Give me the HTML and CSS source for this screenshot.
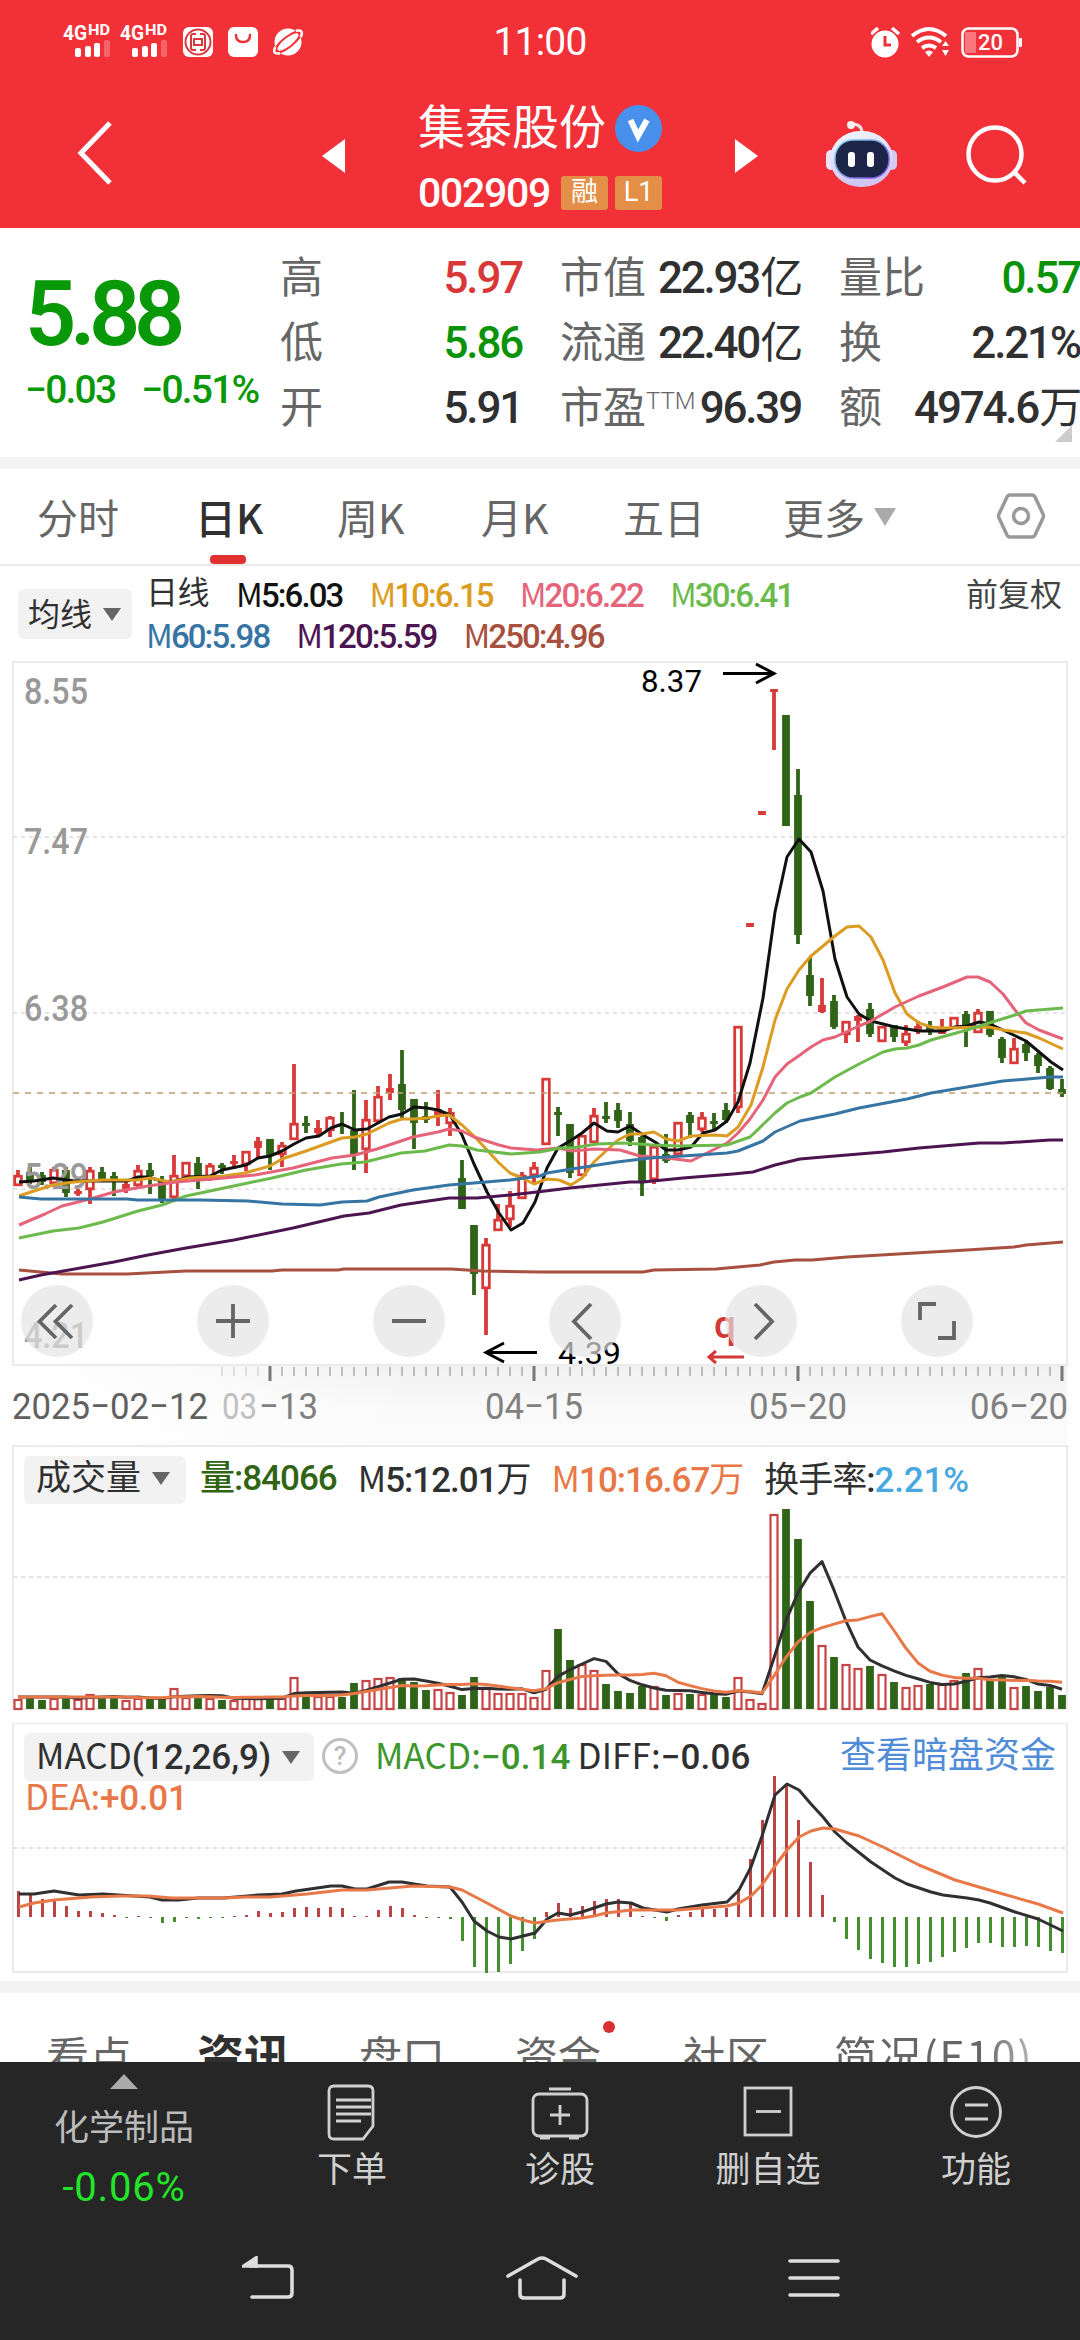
FILE: index.html
```html
<!DOCTYPE html>
<html lang="zh-CN">
<head>
    <meta charset="UTF-8">
    <meta name="viewport" content="width=device-width, initial-scale=1.0">
    <title>集泰股份 002909</title>
    <link rel="stylesheet" href="styles.css">
</head>
<body>

<header class="header">
    <div class="status">
        <svg class="status-left" width="260" height="36" viewBox="0 0 260 36" fill="#fff">
            <g id="signal">
                <text x="0" y="18" font-size="21" font-weight="700" textLength="24" lengthAdjust="spacingAndGlyphs">4G</text>
                <text x="25" y="13" font-size="14" font-weight="700" textLength="22" lengthAdjust="spacingAndGlyphs">HD</text>
                <rect x="12" y="26" width="6" height="9" rx="2"/>
                <rect x="22" y="24" width="6" height="11" rx="2"/>
                <rect x="31" y="21" width="6" height="14" rx="2"/>
                <rect x="41" y="18" width="6" height="17" rx="2" opacity=".25"/>
            </g>
            <use href="#signal" x="57"/>
            <rect x="120" y="5" width="30" height="30" rx="6"/>
            <g fill="none" stroke="#d9363c" stroke-width="2">
                <circle cx="135" cy="20" r="12.5"/>
                <rect x="131" y="17" width="8" height="6"/>
                <path d="M133 12h-3q-2 0-2 2v12q0 2 2 2h3M137 12h3q2 0 2 2v12q0 2-2 2h-3"/>
            </g>
            <rect x="165" y="5" width="30" height="30" rx="6"/>
            <path d="M173 13q0 7 7 7t7-7" fill="none" stroke="#f03038" stroke-width="2.5" stroke-linecap="round"/>
            <circle cx="225" cy="20" r="13.5"/>
            <g transform="rotate(-38 225 20)">
                <ellipse cx="225" cy="20" rx="17.500" ry="6" fill="#f23037"/>
                <path d="M212 16q-8 4 0 8M238 16q8 4 0 8" fill="none" stroke="#fff" stroke-width="2.500"/>
                <ellipse cx="225" cy="20" rx="13" ry="4" fill="#fff"/>
            </g>
        </svg>
        <span class="time">11:00</span>
        <svg class="status-right" width="152" height="34" viewBox="0 0 152 34" fill="#fff">
            <circle cx="14" cy="18" r="13.5"/>
            <path d="M0 8l7-6M21 2l7 6" stroke="#fff" stroke-width="3.5"/>
            <path d="M14 10v9h6" fill="none" stroke="#e8323a" stroke-width="3"/>
            <g fill="none" stroke="#fff" stroke-width="4">
                <path d="M41 10q17-14 34 0M46 16q12-9 24 0M51 22q7-5 14 0"/>
            </g>
            <path d="M54 26q4-3 8 0l-4 5zM71 20l3.500-5 3.500 5zM71 24l3.500 6 3.500-6z"/>
            <rect x="91.500" y="2.500" width="55" height="28" rx="6" fill="none" stroke="#fff" stroke-width="2.500"/>
            <rect x="94" y="6" width="11" height="21" fill="#f8787d"/>
            <rect x="148" y="12" width="3" height="9" rx="1"/>
            <text x="107" y="24" font-size="22" font-weight="500" textLength="25">20</text>
        </svg>
    </div>
    <div class="titlebar">
        <svg class="back" width="36" height="64" viewBox="0 0 36 64" fill="none" stroke="#fff" stroke-width="5"><path d="M33 2L4 32l29 30"/></svg>
        <svg width="23" height="34" viewBox="0 0 23 34" fill="#fff"><path d="M23 0v34L0 17z"/></svg>
        <div class="title">
            <div class="name"><span>集泰股份</span>
                <svg width="47" height="47" viewBox="0 0 47 47"><circle cx="23.500" cy="23.500" r="23.500" fill="#4890ec"/><path d="M15.500 15l7.500 16 9-16" fill="none" stroke="#fff" stroke-width="6"/></svg>
            </div>
            <div class="code"><b>002909</b><i>融</i><i>L1</i></div>
        </div>
        <svg width="23" height="34" viewBox="0 0 23 34" fill="#fff"><path d="M0 0v34l23-17z"/></svg>
        <svg class="robot" width="74" height="68" viewBox="0 0 74 68">
            <defs>
                <linearGradient id="shell" x1="0" y1="0" x2=".3" y2="1"><stop offset="0" stop-color="#f4fbff"/><stop offset="1" stop-color="#cfc4f4"/></linearGradient>
                <linearGradient id="rim" x1="0" y1="0" x2="1" y2="1"><stop offset="0" stop-color="#7be0e8"/><stop offset="1" stop-color="#7a3fe0"/></linearGradient>
            </defs>
            <path d="M27 4q10 0 10 9" fill="none" stroke="#f0e0ea" stroke-width="3"/>
            <circle cx="26" cy="5" r="4" fill="#fff0f2"/>
            <rect x="1" y="30" width="10" height="20" rx="5" fill="#e8e4fb"/>
            <rect x="62" y="30" width="10" height="20" rx="5" fill="#d4caf4"/>
            <rect x="5" y="11" width="63" height="56" rx="30" fill="url(#shell)"/>
            <rect x="10" y="20" width="54" height="38" rx="18" fill="#1c2448" stroke="url(#rim)" stroke-width="1.500"/>
            <rect x="23" y="32" width="7" height="15" rx="3" fill="#fff"/>
            <rect x="42" y="32" width="7" height="15" rx="3" fill="#fff"/>
        </svg>
        <svg class="search" width="62" height="62" viewBox="0 0 62 62" fill="none" stroke="#fff" stroke-width="4.500"><circle cx="29" cy="29" r="26.500"/><path d="M48 47l11 11"/></svg>
    </div>
</header>

<section class="quote">
    <div class="price">
        <div class="last">5.88</div>
        <div class="change"><span>−0.03</span><span>−0.51%</span></div>
    </div>
    <dl class="stats">
        <dt>高</dt><dd class="up">5.97</dd>
        <dt>市值</dt><dd>22.93<em>亿</em></dd>
        <dt>量比</dt><dd class="down">0.57</dd>
        <dt>低</dt><dd class="down">5.86</dd>
        <dt>流通</dt><dd>22.40<em>亿</em></dd>
        <dt>换</dt><dd>2.21%</dd>
        <dt>开</dt><dd>5.91</dd>
        <dt>市盈<sup>TTM</sup></dt><dd>96.39</dd>
        <dt>额</dt><dd>4974.6<em>万</em></dd>
    </dl>
    <span class="corner"></span>
</section>

<nav class="tabs">
    <a>分时</a>
    <a class="active">日K</a>
    <a>周K</a>
    <a>月K</a>
    <a>五日</a>
    <a>更多<span class="arrow"></span></a>
    <svg width="50" height="46" viewBox="0 0 50 46" fill="none" stroke="#999" stroke-width="3.500"><path d="M14 2h22q2 0 3 2l8 17q1 2 0 4l-8 17q-1 2-3 2H14q-2 0-3-2L3 25q-1-2 0-4l8-17q1-2 3-2z"/><circle cx="25" cy="23" r="7.500"/></svg>
</nav>

<section class="legend">
    <button class="pick">均线<span class="arrow"></span></button>
    <div class="rows">
        <div><span class="day">日线</span><span class="m5"><s>M</s>5:6.03</span><span class="m10"><s>M</s>10:6.15</span><span class="m20"><s>M</s>20:6.22</span><span class="m30"><s>M</s>30:6.41</span></div>
        <div><span class="m60"><s>M</s>60:5.98</span><span class="m120"><s>M</s>120:5.59</span><span class="m250"><s>M</s>250:4.96</span></div>
    </div>
    <span class="adjust">前复权</span>
</section>

<section class="kline">
    <svg id="kline" width="1080" height="784" viewBox="0 0 1080 784">
        <defs>
            <linearGradient id="fade"><stop offset="0" stop-color="#fff"/><stop offset=".3" stop-color="#fff" stop-opacity=".8"/><stop offset="1" stop-color="#fff" stop-opacity="0"/></linearGradient>
            <linearGradient id="axis" x1="0" y1="0" x2="0" y2="1"><stop offset="0" stop-color="#f1f1f1"/><stop offset=".5" stop-color="#f9f9f9"/><stop offset="1" stop-color="#fbfbfb"/></linearGradient>
        </defs>
    </svg>
    <div class="tools">
        <button><svg viewBox="0 0 72 72"><path d="M35 20L18.500 36.500 35 53M51 20L34.500 36.500 51 53"/></svg></button>
        <button><svg viewBox="0 0 72 72"><path d="M19 36h34M36 19v34"/></svg></button>
        <button><svg viewBox="0 0 72 72"><path d="M19 36h34"/></svg></button>
        <button><svg viewBox="0 0 72 72"><path d="M42 19L25 36.500 42 54"/></svg></button>
        <button><svg viewBox="0 0 72 72"><path d="M30 19l17 17.500L30 54"/></svg></button>
        <button><svg viewBox="0 0 72 72"><path d="M19 35V19h16M53 36v17H37"/></svg></button>
    </div>
</section>

<section class="panel volume">
    <svg id="volume" width="1080" height="277" viewBox="0 0 1080 277"></svg>
    <div class="bar">
        <button class="pick">成交量<span class="arrow"></span></button>
        <span class="vol">量:84066</span>
        <span class="dark"><s>M</s>5:12.01<em>万</em></span>
        <span class="orange"><s>M</s>10:16.67<em>万</em></span>
        <span class="dark"><em>换手率</em>:<span class="blue">2.21%</span></span>
    </div>
</section>

<section class="panel macd">
    <svg id="macd" width="1080" height="258" viewBox="0 0 1080 258"></svg>
    <div class="bar">
        <button class="pick"><s>MACD</s>(12,26,9)<span class="arrow"></span></button>
        <span class="help">?</span>
        <span class="green"><s>MACD:</s>−0.14</span>
        <span class="dark"><s>DIFF:</s>−0.06</span>
        <a class="link">查看暗盘资金</a>
    </div>
    <div class="dea"><s>DEA:</s>+0.01</div>
</section>

<nav class="news">
    <a>看点</a>
    <a class="active">资讯</a>
    <a>盘口</a>
    <a class="dot">资金</a>
    <a>社区</a>
    <a class="last-tab">简况(E10)</a>
</nav>

<footer class="footer">
    <div class="actions">
        <div class="industry">
            <span class="tri"></span>
            <span>化学制品</span>
            <b>-0.06%</b>
        </div>
        <div class="action">
            <svg width="58" height="58" viewBox="0 0 58 58"><path d="M11 3h34q5 0 5 5v35L40 56H11q-5 0-5-5V8q0-5 5-5z"/><path d="M13 17h35M13 24h35M13 31h35M13 38h25"/></svg>
            <span>下单</span>
        </div>
        <div class="action">
            <svg width="58" height="58" viewBox="0 0 58 58"><rect x="2" y="11" width="54" height="42" rx="6"/><path d="M18 6h22M29 22v20M19 32h20M9 55h10M38 55h10"/></svg>
            <span>诊股</span>
        </div>
        <div class="action">
            <svg width="58" height="58" viewBox="0 0 58 58"><rect x="6" y="5" width="46" height="47"/><path d="M17 28.500h25"/></svg>
            <span>删自选</span>
        </div>
        <div class="action">
            <svg width="58" height="58" viewBox="0 0 58 58"><circle cx="29" cy="29" r="24.500"/><path d="M18 22h23M18 36h23"/></svg>
            <span>功能</span>
        </div>
    </div>
    <div class="nav">
        <svg width="54" height="44" viewBox="0 0 54 44"><path d="M8 10h38q4 0 4 4v23q0 4-4 4H10" /><path d="M2 10l12-8v8z" fill="#ddd"/></svg>
        <svg width="74" height="46" viewBox="0 0 74 46"><path d="M3 21L33 4q4-2 8 0l30 17M15 25v14q0 4 4 4h36q4 0 4-4V25"/></svg>
        <svg width="52" height="44" viewBox="0 0 52 44"><path d="M2 5h48M2 22h48M2 39h48"/></svg>
    </div>
</footer>

<script src="chart.js"></script>
</body>
</html>
```
FILE: styles.css
```css
* {
    box-sizing: border-box;
}
body {
    margin: 0;
    width: 1080px;
    height: 2340px;
    overflow: hidden;
    background: #fff;
    color: #303030;
    font-family: Roboto, "Noto Sans CJK SC", sans-serif;
}
svg {
    display: block;
}
svg text {
    font-family: Roboto, sans-serif;
}
b, i, em, s {
    font-style: normal;
    text-decoration: none;
}
button {
    border: none;
    padding: 0;
    color: inherit;
    font-family: inherit;
}
s, em {
    font-family: "Noto Sans CJK SC", sans-serif;
    font-weight: 400;
}
.header {
    height: 228px;
    background: #f23037;
    color: #fff;
}
.status {
    display: grid;
    grid-template-columns: 430px 220px 430px;
    height: 84px;
    align-items: start;
}
.status-left {
    margin: 22px 0 0 63px;
}
.time {
    margin-top: 19px;
    text-align: center;
    font-size: 39px;
    line-height: 46px;
    letter-spacing: -.8px;
}
.status-right {
    margin: 26px 0 0 221px;
}
.titlebar {
    display: grid;
    grid-template-columns: 322px 23px 390px 23px 67px 121px 1fr;
    height: 144px;
}
.titlebar > svg {
    margin-top: 55px;
}
.titlebar .back {
    margin: 37px 0 0 77px;
}
.titlebar .robot {
    grid-column: 6;
    margin: 36px 0 0;
}
.titlebar .search {
    margin: 41px 0 0 20px;
}
.title {
    padding-left: 73px;
}
.name {
    display: flex;
    align-items: center;
    gap: 9px;
    margin-top: 16px;
    height: 56px;
    font-size: 47px;
    line-height: 56px;
    white-space: nowrap;
}
.name span {
    margin-top: 0;
}
.name svg {
    flex: none;
}
.code {
    display: flex;
    align-items: center;
    margin-top: 16px;
    gap: 7px;
    height: 42px;
}
.code b {
    margin-right: 4px;
    width: 132px;
    font-size: 41px;
    font-weight: 500;
    letter-spacing: -1.3px;
}
.code i {
    width: 47px;
    height: 34px;
    line-height: 33px;
    text-align: center;
    font-size: 27px;
    border-radius: 3px;
    background: #e38f48;
}
.quote {
    position: relative;
    display: flex;
    height: 241px;
    border-bottom: 12px solid #f4f4f4;
}
.price {
    width: 280px;
    padding-left: 25px;
    color: #089808;
    font-weight: 500;
}
.last {
    margin-top: 32px;
    font-size: 90px;
    line-height: 110px;
    font-weight: 600;
    letter-spacing: -6.5px;
}
.change {
    display: flex;
    gap: 26px;
    margin-top: -3px;
    font-size: 39px;
    line-height: 46px;
    letter-spacing: -1.8px;
}
.stats {
    display: grid;
    grid-template-columns: 80px 200px 138px 141px 100px 141px;
    grid-auto-rows: 65px;
    margin: 18px 0 0;
    width: 800px;
    align-items: center;
    white-space: nowrap;
    line-height: 65px;
}
.stats dt {
    font-size: 43px;
    color: #666;
}
.stats dt sup {
    font-size: 24px;
    font-weight: 300;
    line-height: 0;
    vertical-align: 14px;
}
.stats dd {
    margin: 0;
    font-size: 44px;
    font-weight: 500;
    text-align: right;
    letter-spacing: -2.2px;
    justify-self: end;
}
.stats dd:nth-of-type(3n+1), .stats dd:nth-of-type(3n+2) {
    margin-right: 38px;
}
.stats dd em {
    font-size: 43px;
    margin-left: 1px;
    line-height: 0;
}
.stats .up {
    color: #d83838;
}
.stats .down {
    color: #0a930a;
}
.corner {
    position: absolute;
    right: 8px;
    bottom: 15px;
    border-left: 17px solid transparent;
    border-bottom: 17px solid #ccc;
}
.tabs {
    display: grid;
    grid-template-columns: 158px 142px 144px 142px 160px 213px 50px;
    align-items: center;
    height: 97px;
    padding-left: 37px;
    border-bottom: 2px solid #e8e8e8;
    color: #666;
    font-size: 41px;
    font-family: "Noto Sans CJK SC", sans-serif;
}
.tabs a {
    position: relative;
    top: -1px;
    line-height: 60px;
}
.tabs .active {
    color: #303030;
    font-weight: 500;
}
.tabs .active::after {
    content: "";
    position: absolute;
    left: 15px;
    bottom: -18px;
    width: 36px;
    height: 9px;
    border-radius: 4px;
    background: #e03030;
}
.tabs svg {
    margin-top: -1px;
}
.arrow {
    display: inline-block;
    margin-left: 11px;
    border: 9px solid transparent;
    border-top: 13px solid #666;
    border-bottom: 0;
    vertical-align: 5px;
}
.tabs .arrow {
    margin-left: 9px;
    border-width: 18px 11px 0;
    border-top-color: #aaa;
    vertical-align: 8px;
}
.legend {
    display: flex;
    height: 95px;
    padding-left: 18px;
    font-size: 33px;
    font-weight: 500;
    letter-spacing: -1.9px;
}
.pick {
    height: 48px;
    border-radius: 6px;
    background: #f2f2f2;
    text-align: left;
}
.legend .pick {
    width: 114px;
    height: 50px;
    margin-top: 23px;
    padding: 0 0 4px 10px;
    font-size: 32px;
}
.rows {
    width: 750px;
    padding: 7px 0 0 14px;
}
.rows div {
    display: flex;
    gap: 27px;
    height: 41px;
    line-height: 41px;
}
.day, .adjust {
    font-weight: 400;
    font-size: 32px;
    letter-spacing: -.5px;
}
.adjust {
    margin: 8px 18px 0 auto;
    line-height: 42px;
    color: #444;
    letter-spacing: 0;
}
.m5 { color: #111; }
.m10 { color: #dc9c22; }
.m20 { color: #e5647a; }
.m30 { color: #6cba4c; }
.m60 { color: #3674a4; }
.m120 { color: #4c1450; }
.m250 { color: #a85040; }
.kline, .panel {
    position: relative;
}
.tools {
    position: absolute;
    left: 21px;
    top: 624px;
    display: flex;
    gap: 104px;
}
.tools button {
    width: 72px;
    height: 72px;
    border-radius: 50%;
    background: rgba(227, 227, 227, .68);
}
.tools path {
    fill: none;
    stroke: #666;
    stroke-width: 3.8;
}
.volume {
    height: 278px;
}
.panel .bar {
    position: absolute;
    left: 24px;
    right: 24px;
    top: 11px;
    display: flex;
    align-items: center;
    height: 48px;
    font-size: 35px;
    line-height: 40px;
    font-weight: 500;
    letter-spacing: -1px;
    white-space: nowrap;
}
.panel .bar > span, .bar .link {
    margin-top: -2px;
}
.panel .pick {
    padding: 0 0 3px 12px;
    font-size: 35px;
    line-height: 40px;
    font-weight: 500;
    letter-spacing: 0;
}
.panel.volume .pick {
    width: 162px;
    margin-right: 14px;
    font-weight: 400;
}
.volume .bar > span {
    margin-right: 21px;
}
.panel.macd .pick {
    width: 290px;
    letter-spacing: 0;
}
.panel.macd .bar {
    top: 10px;
    letter-spacing: .1px;
}
.vol { color: #306414; }
.dark { color: #303030; }
.orange, .dea { color: #e87848; }
.blue {
    color: #48a8e0;
    letter-spacing: -.2px;
}
.green { color: #3c962c; }
.bar .help {
    width: 36px;
    height: 36px;
    margin: 0 17px 0 8px;
    border: 3px solid #c0c0c0;
    border-radius: 50%;
    color: #bbb;
    font-size: 26px;
    line-height: 31px;
    text-align: center;
}
.macd .green {
    margin-right: 7px;
}
.link {
    margin-left: auto;
    color: #508cd8;
    font-size: 36px;
    font-weight: 400;
    letter-spacing: 0;
}
.dea {
    position: absolute;
    left: 25px;
    top: 50px;
    font-size: 35px;
    line-height: 44px;
    font-weight: 500;
    letter-spacing: -.2px;
}
.news {
    display: grid;
    grid-template-columns: 151px 162px 156px 168px 151px 1fr;
    height: 81px;
    padding: 32px 0 0 46px;
    border-top: 12px solid #f4f4f4;
    overflow: hidden;
    color: #666;
    font-size: 43px;
    line-height: 58px;
    font-family: "Noto Sans CJK SC", sans-serif;
}
.news a {
    position: relative;
}
.news .active {
    color: #303030;
    font-size: 47px;
    font-weight: 700;
}
.dot::after {
    content: "";
    position: absolute;
    left: 88px;
    top: -4px;
    width: 12px;
    height: 12px;
    border-radius: 50%;
    background: #d83030;
}
.last-tab {
    letter-spacing: 1.6px;
    background: linear-gradient(90deg, #666 60%, #bbb 82%);
    background-clip: text;
    -webkit-background-clip: text;
    color: transparent;
}
.footer {
    height: 279px;
    background: #262626;
    color: #d0d0d0;
}
.actions {
    display: grid;
    grid-template-columns: 248px 208px 208px 208px 208px;
    height: 171px;
}
.industry, .action {
    display: flex;
    flex-direction: column;
    align-items: center;
    font-size: 35px;
}
.industry {
    color: #bbb;
}
.tri {
    margin: 12px 0 10px;
    border: 14px solid transparent;
    border-bottom: 15px solid #aaa;
    border-top: 0;
}
.industry b {
    margin-top: 15px;
    color: #22e428;
    font-weight: 400;
    font-size: 40px;
    line-height: 46px;
    letter-spacing: .8px;
}
.action svg {
    margin: 21px 0 0;
    fill: none;
    stroke: #d0d0d0;
    stroke-width: 2.8;
}
.nav {
    display: flex;
    align-items: center;
    height: 90px;
    padding-left: 242px;
    gap: 209px;
}
.nav svg {
    fill: none;
    stroke: #ddd;
    stroke-width: 3.6;
    stroke-linecap: round;
}
```
FILE: chart.js
```js
const STEP = 12;
const X0 = 18;
const RED = "#d83a3a";
const GREEN = "#306418";

// [up, high, top of body, bottom of body, low]
const candles = [
    [1,509,514,525,525],[0,506,511,521,523],[0,511,514,521,524],[1,506,508,523,525],[0,506,509,532,536],[1,528,530,533,535],
    [1,506,509,529,543],[0,506,511,519,520],[0,511,515,521,535],[1,518,523,530,532],[1,504,509,525,526],[0,502,509,515,533],
    [0,515,519,539,542],[1,494,514,537,538],[1,501,501,516,516],[0,496,502,516,528],[1,502,504,518,520],[0,502,504,507,513],
    [1,494,500,503,508],[1,490,490,504,510],[1,476,480,487,497],[0,478,478,494,509],[1,481,484,494,506],[1,403,462,479,479],
    [0,455,462,465,472],[1,459,467,472,474],[1,455,456,470,476],[0,451,463,466,473],[0,429,469,493,509],[1,439,458,489,512],
    [1,425,435,461,463],[1,413,427,432,439],[0,389,423,449,457],[0,438,438,462,488],[0,441,455,459,462],[1,429,448,454,465],
    [1,447,451,463,475],[0,499,517,548,548],[0,564,564,613,634],[1,577,583,628,674],[1,543,558,570,570],[1,530,544,559,566],
    [1,511,514,538,538],[1,501,506,515,522],[1,417,417,484,484],[0,446,451,453,475],[0,463,463,512,517],[1,474,474,515,515],
    [1,447,454,482,482],[0,441,455,457,462],[0,442,449,460,467],[0,451,463,480,485],[0,475,476,521,535],[1,485,485,519,523],
    [0,473,493,500,502],[1,461,461,494,496],[0,451,454,462,477],[1,451,456,469,471],[0,452,460,463,469],[0,442,449,459,462],
    [1,365,365,447,452],[1,262,262,266,266],[1,150,150,154,154],[1,28,28,31,89],[0,54,54,165,165],[0,108,134,274,283],
    [0,296,314,335,345],[1,317,344,351,352],[0,334,340,366,368],[1,360,360,374,382],[1,354,355,360,381],[0,342,348,373,376],
    [1,365,365,381,381],[0,364,364,376,381],[1,364,372,382,385],[1,360,365,371,373],[0,360,365,371,374],[1,358,366,373,373],
    [1,356,356,368,368],[0,350,353,366,386],[1,348,351,372,372],[0,350,350,374,376],[0,376,378,397,402],[1,377,387,403,403],
    [0,381,383,392,400],[0,392,394,405,412],[0,405,407,428,429],[0,418,428,433,436]
];

const averages = [
    ["#a85040", "19,609 62,613 127,613 186,610 272,610 282,609 338,609 344,608 451,608 482,610 540,611 643,611 654,609 716,608 760,604 774,601 795,599 812,599 847,596 915,592 967,589 1014,586 1026,584 1063,581"],
    ["#111", "19,521 34,520 53,517 74,520 103,520 127,520 138,516 148,516 165,521 176,520 188,516 210,515 222,509 246,504 258,497 270,495 282,490 294,483 306,477 319,475 331,467 342,463 355,469 367,468 389,456 402,453 414,446 427,447 438,449 450,454 462,474 474,503 487,531 499,552 511,569 523,562 535,541 547,507 558,487 570,480 582,472 594,462 607,470 618,471 630,465 643,474 655,481 666,489 678,489 691,486 703,472 715,469 727,460 738,441 750,402 763,337 775,251 787,196 799,178 811,191 823,230 835,298 847,336 859,353 871,360 895,366 919,370 943,370 955,366 967,365 979,361 990,363 1003,369 1026,380 1051,401 1063,409"],
    ["#dc9c22", "19,535 34,530 53,524 74,521 103,519 138,519 150,517 170,521 189,517 224,515 245,512 270,505 282,498 306,490 331,481 342,477 355,476 367,473 389,462 402,458 414,458 427,457 438,455 449,454 462,464 474,475 487,489 499,502 510,512 522,517 534,523 547,518 559,519 571,524 582,517 594,501 607,489 618,479 630,473 642,473 654,471 666,478 678,480 691,475 715,474 727,475 738,466 751,444 763,406 775,359 787,328 799,309 811,295 823,285 835,275 847,266 859,265 871,276 883,299 895,332 907,353 919,362 931,366 943,367 989,366 1003,369 1026,372 1039,377 1063,388"],
    ["#e5647a", "19,564 45,553 62,545 90,538 114,531 148,525 176,521 224,517 255,514 293,507 332,497 355,494 377,488 413,476 438,471 449,468 462,470 474,476 499,484 511,487 537,489 558,487 572,490 594,488 620,489 640,495 667,497 691,500 703,494 727,482 738,472 750,458 763,439 775,416 787,403 800,394 811,386 823,379 835,376 859,365 871,360 895,346 919,335 943,326 967,316 978,316 990,321 1003,333 1015,349 1026,362 1039,369 1063,378"],
    ["#6cba4c", "19,577 53,570 79,567 103,561 138,550 162,544 186,535 210,530 248,522 272,517 306,509 341,503 365,501 401,492 425,490 449,484 462,485 477,489 511,493 540,491 560,487 572,487 597,483 623,482 653,484 680,485 727,484 750,476 775,452 787,442 800,436 811,432 835,416 859,403 883,391 895,388 907,387 919,384 931,379 967,369 989,362 1015,354 1026,350 1063,347"],
    ["#3674a4", "19,536 41,538 127,538 138,539 200,539 248,540 282,543 320,544 342,541 367,540 379,536 413,529 449,524 474,522 510,519 540,515 547,512 572,508 617,501 650,497 683,495 727,492 738,490 763,480 775,471 800,460 835,453 859,447 907,438 931,432 955,428 1003,420 1050,416 1063,416"],
    ["#4c1450", "19,619 41,614 114,601 148,594 186,587 234,579 293,567 344,555 369,552 401,544 449,537 477,537 510,534 537,531 570,527 600,524 630,521 643,521 683,517 733,513 753,511 775,504 800,498 823,496 883,491 919,487 979,482 1003,482 1050,479 1063,479"]
];

const volumes = [
    10,12,9,11,12,10,15,12.5,12.5,9,11,10,10,21,12,13,11,9,9,11,11,12,11,32,15,13,13,12,26,29,31,32,31,27,19,20,17,14,32,21,16,16,16,12,
    39,80,49,45,39,25,18,16,23,23,14,16,15,15,16,12,32,10,6,195,200,170,108,64,52,45,41,43,35,27,22,24,25,25,29,36,41,29,33,22,23,18,22,14
];

const macd = [
    26,22,18,17,11,6,6,4,2,-1,1,-1,-6,-5,-1,-2,-1,-1,1,2,6,4,5,9,10,9,10,9,1,1,7,11,9,2,-1,-1,-2,-24,-50,-56,-55,-47,-34,-22,
    5,14,9,11,16,18,18,13,1,-1,-4,2,5,8,8,9,28,58,97,141,132,97,55,22,-5,-22,-33,-42,-46,-50,-50,-47,-45,-40,-35,-31,-26,-26,-30,-30,-29,-30,-34,-36
];
const diff = "19,171 34,171 54,168 79,172 103,171 150,174 162,177 179,177 198,175 224,175 258,172 282,171 296,168 331,163 342,163 355,166 367,166 389,159 402,159 414,161 427,163 450,164 462,179 474,198 487,208 499,214 511,216 523,213 535,210 542,202 547,196 558,190 570,192 582,189 606,181 618,179 631,180 643,185 667,189 678,186 702,182 727,179 739,167 751,144 762,113 775,72 787,61 799,67 811,81 823,94 835,109 847,120 871,139 895,155 907,161 931,169 943,172 967,175 979,177 990,180 1015,189 1038,196 1063,208";
const dea = "19,184 34,180 54,177 91,174 121,173 148,173 172,175 224,175 245,174 270,174 307,171 342,167 367,167 413,163 450,164 462,167 487,180 511,193 523,197 535,200 557,197 582,195 594,193 606,190 631,187 678,187 702,185 727,183 739,180 751,173 762,162 775,143 787,127 799,114 811,108 823,105 835,106 859,113 883,124 919,142 955,157 979,164 1003,171 1038,181 1063,190";

function rect(x, y, w, h, fill, stroke, width) {
    return `<rect x="${x}" y="${y}" width="${w}" height="${h}" fill="${fill}" stroke="${stroke || "none"}" stroke-width="${width || 2.2}"/>`;
}
function line(x1, y1, x2, y2, color, width, dash) {
    return `<path d="M${x1} ${y1}L${x2} ${y2}" stroke="${color}" stroke-width="${width}" stroke-dasharray="${dash || "none"}"/>`;
}
function curve(points, color) {
    return `<polyline points="${points}" fill="none" stroke="${color}" stroke-width="3" stroke-linejoin="round"/>`;
}
function label(x, y, w, text, color, size, weight) {
    return `<text x="${x}" y="${y}" textLength="${w}" lengthAdjust="spacingAndGlyphs" fill="${color}" font-size="${size}" font-weight="${weight}">${text}</text>`;
}

function drawKline() {
    let s = rect(13, 705, 1054, 78, "url(#axis)") + rect(13, 704, 400, 80, "url(#fade)");
    s += rect(13, 1, 1054, 703, "none", "#ebebeb");
    [176, 352, 528].forEach(y => s += line(13, y, 1067, y, "#dcdcdc", 1.3, "4 4"));
    candles.forEach(([up, high, top, bottom, low], i) => {
        const x = X0 + i * STEP;
        const color = up ? RED : GREEN;
        s += line(x, high, x, top, color, 3.8) + line(x, bottom, x, low, color, 3.8);
        if (up && bottom - top > 7) {
            s += rect(x - 3.3, top + 1.2, 6.6, bottom - top - 2.4, "#fff", color, 2.8);
        } else {
            s += rect(x - 3.9, top, 7.8, Math.max(bottom - top, 3), color);
        }
    });
    [["8.55", 43], ["7.47", 193], ["6.38", 360], ["5.29", 528], ["4.21", 687]].forEach(([t, y]) => s += label(24, y, 64, t, "#999", 36, 500));
    s += line(13, 432, 1067, 432, "#c0a070", 1.6, "6 6");
    averages.forEach(([color, points]) => s += curve(points, color));
    s += label(641, 31, 61, "8.37", "#000", 31, 400) + label(558, 703, 63, "4.39", "#000", 31, 400);
    s += `<path d="M723 12.500h51M756 3l18 9.500-18 9.500M537 691.500h-50M504 682l-18 9.500 18 9.500" fill="none" stroke="#000" stroke-width="3"/>`;
    s += `<path d="M744 696h-35M716 690l-7 6 7 6" fill="none" stroke="#d43838" stroke-width="3"/>`;
    s += label(714, 677, 22, "q", "#d43838", 38, 500);
    for (let i = 17; i < 88; i++) {
        const x = X0 + i * STEP;
        if (i % 22 === 21) {
            s += line(x, 705, x, 720, "#777", 3);
        } else {
            s += line(x, 706, x, 715, i < 22 ? "#ccc" : "#999", 1.2);
        }
    }
    s += label(12, 758, 196, "2025−02−12", "#606060", 37, 400);
    s += label(222, 758, 35, "03", "#c0c0c0", 37, 400) + label(259, 758, 59, "−13", "#808080", 37, 400);
    s += label(485, 758, 98, "04−15", "#808080", 37, 400);
    s += label(749, 758, 98, "05−20", "#808080", 37, 400);
    s += label(970, 758, 98, "06−20", "#808080", 37, 400);
    document.getElementById("kline").innerHTML += s;
}

function movingAverage(n) {
    return volumes.map((v, i) => {
        const part = volumes.slice(Math.max(0, i - n + 1), i + 1);
        const avg = i < n ? 12 : part.reduce((a, b) => a + b, 0) / n;
        return (X0 + i * STEP) + "," + (264 - avg);
    }).join(" ");
}

function drawVolume() {
    let s = rect(13, 1, 1054, 263, "none", "#ebebeb") + line(13, 132, 1067, 132, "#dcdcdc", 1.3, "4 4");
    volumes.forEach((v, i) => {
        const x = X0 + i * STEP;
        s += candles[i][0] ? rect(x - 3.5, 265 - v, 7, v - 1, "#fff", "#c84444") : rect(x - 3.9, 264 - v, 7.8, v, GREEN);
    });
    s += curve(movingAverage(5), "#303030") + curve(movingAverage(10), "#e87848");
    document.getElementById("volume").innerHTML = s;
}

function drawMacd() {
    let s = rect(13, 0, 1054, 249, "none", "#ebebeb") + line(13, 125, 1067, 125, "#dcdcdc", 1.3, "4 4");
    macd.forEach((v, i) => {
        const x = X0 + i * STEP + .5;
        s += line(x, 194, x, 194 - v, v > 0 ? "#b84444" : "#449030", 3);
    });
    s += curve(diff, "#303030") + curve(dea, "#e87848");
    document.getElementById("macd").innerHTML = s;
}

drawKline();
drawVolume();
drawMacd();
```
